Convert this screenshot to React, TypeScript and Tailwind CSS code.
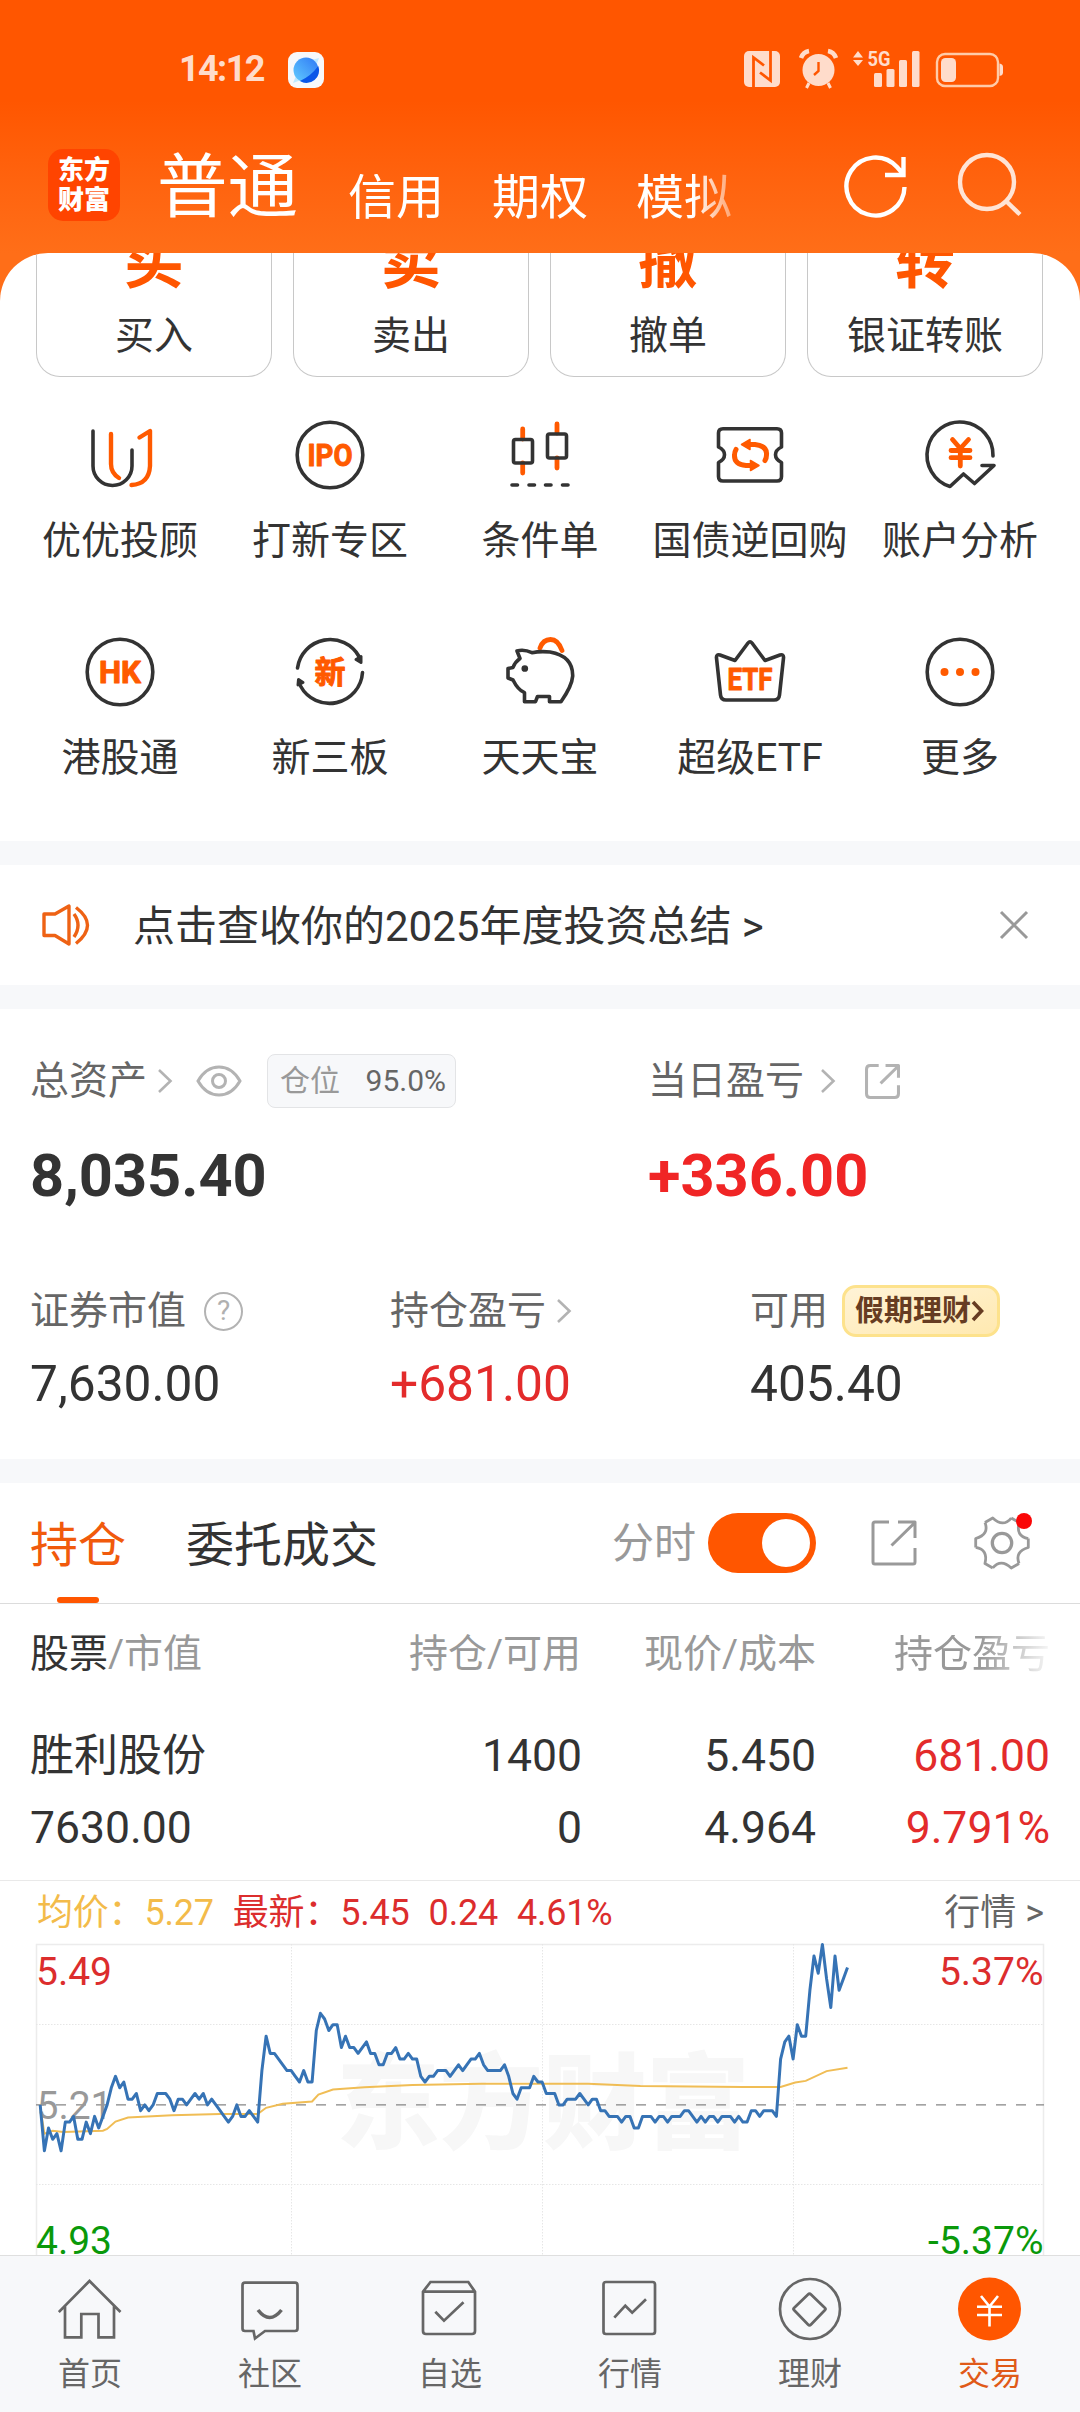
import type { ReactNode } from 'react'

const DARK = '#333333'
const ORANGE = '#ff5a00'
const FONT = "Roboto, 'Noto Sans CJK SC', sans-serif"

const actions = [
  { glyph: '买', label: '买入' },
  { glyph: '卖', label: '卖出' },
  { glyph: '撤', label: '撤单' },
  { glyph: '转', label: '银证转账' },
]

function IconBox({ children }: { children: ReactNode }) {
  return (
    <svg className="shrink-0" width="80" height="80" viewBox="0 0 80 80" fill="none" stroke={DARK} strokeWidth="3.6" strokeLinecap="round" strokeLinejoin="round">
      {children}
    </svg>
  )
}

function IconText({ y, width, children }: { y: number; width: number; children: string }) {
  return (
    <text x={40 - width / 2} y={y} textLength={width} lengthAdjust="spacingAndGlyphs" fill={ORANGE} stroke={ORANGE} strokeWidth="1" fontSize="31" fontWeight="700" fontFamily={FONT}>
      {children}
    </text>
  )
}

const services: { label: string; icon: ReactNode }[] = [
  {
    label: '优优投顾',
    icon: (
      <IconBox>
        <path d="M13 16V51A19.5 19.5 0 0 0 52 51V35" />
        <path d="M31 19V49Q31 58 39 63M59.5 22.5L70 16V51Q69 69 51.5 70" stroke={ORANGE} strokeWidth="4.4" />
      </IconBox>
    ),
  },
  {
    label: '打新专区',
    icon: (
      <IconBox>
        <circle cx="40" cy="40" r="32.8" />
        <IconText y={51} width={45}>IPO</IconText>
      </IconBox>
    ),
  },
  {
    label: '条件单',
    icon: (
      <IconBox>
        <path d="M22.7 14V24M22.7 48V58M57 9V18M57 43V53" stroke={ORANGE} strokeWidth="4.8" />
        <rect x="13.5" y="24.5" width="19" height="23.5" rx="2" />
        <rect x="47.5" y="19" width="19" height="24" rx="2" />
        <path d="M12 70H17.5M29 70H34.5M45.5 70H51M62.5 70H68" />
      </IconBox>
    ),
  },
  {
    label: '国债逆回购',
    icon: (
      <IconBox>
        <path d="M13 13.7H67Q71.5 13.7 71.5 18V32Q65.5 35 65.5 39.7T71.5 47.5V61.5Q71.5 66 67 66H13Q8.5 66 8.5 61.5V47.5Q14.5 44.5 14.5 39.7T8.5 32V18Q8.5 13.7 13 13.7Z" />
        <path d="M39 29.5H45Q57.5 31 56.5 40Q56.5 43 55 45.5M26 34.5Q24.5 37 24.5 40Q24 49.5 36 50.5H42" stroke={ORANGE} strokeWidth="5" />
        <path d="M31.5 29.5L40 24.5V34.5ZM49 50.5L40.5 45.5V55.5Z" stroke={ORANGE} fill={ORANGE} strokeWidth="1.5" />
      </IconBox>
    ),
  },
  {
    label: '账户分析',
    icon: (
      <IconBox>
        <path d="M73 41A33 33 0 1 0 30 71.5L43.5 59L54.5 68.5L74 50.5H62" />
        <path d="M32.5 24.5L40.3 33.5L48.5 24.5M40.3 34V51M31 35.5H50M31 42.7H50" stroke={ORANGE} strokeWidth="4.8" />
      </IconBox>
    ),
  },
  {
    label: '港股通',
    icon: (
      <IconBox>
        <circle cx="40" cy="40" r="32.8" />
        <IconText y={51} width={42}>HK</IconText>
      </IconBox>
    ),
  },
  {
    label: '新三板',
    icon: (
      <IconBox>
        <path d="M7.5 36A33 33 0 0 1 69 24.5M72.5 40.5A33 33 0 0 1 10.5 54" />
        <path d="M71 24.5V30.5L66 27.5ZM8.5 47.5L8 53L13 50.5Z" fill={DARK} strokeWidth="3" />
        <IconText y={51} width={31}>新</IconText>
      </IconBox>
    ),
  },
  {
    label: '天天宝',
    icon: (
      <IconBox>
        <path d="M40 16Q43 7.5 50.5 7.5T62 18.5" stroke={ORANGE} strokeWidth="4.8" />
        <path d="M17 19Q24 17 32 20.7Q40 19 50 20Q73 24 72.7 44Q72 54 61 69.7H49.5V64.5H37.5L35.5 69.7H24.5V60.7Q18 58 13 48L8 46V36.5L13 35.5Q15 30 20 26.5Z" />
        <circle cx="24.8" cy="36.5" r="2.6" fill={DARK} strokeWidth="1.5" />
      </IconBox>
    ),
  },
  {
    label: '超级ETF',
    icon: (
      <IconBox>
        <path d="M10 23L25 28.5L38 11Q40 8.5 42 11L55 28.5L70 23Q74 22 73.5 26L69.5 63Q69 68 64 68H16Q11 68 10.5 63L6.5 26Q6 22 10 23Z" />
        <IconText y={58} width={45}>ETF</IconText>
      </IconBox>
    ),
  },
  {
    label: '更多',
    icon: (
      <IconBox>
        <circle cx="40" cy="40" r="32.8" />
        <g fill={ORANGE} stroke="none">
          <circle cx="24.5" cy="40" r="4" />
          <circle cx="40" cy="40" r="4" />
          <circle cx="55.5" cy="40" r="4" />
        </g>
      </IconBox>
    ),
  },
]

const navItems: { label: string; active?: boolean; icon: ReactNode }[] = [
  { label: '首页', icon: <path d="M.8 35L31.5 4L62.5 35M7 29V60.3H23.3V37H40.5V60.3H56V29" /> },
  {
    label: '社区',
    icon: (
      <>
        <path d="M7 5.7H57Q59.5 5.7 59.5 8.5V51.5Q59.5 54 57 54H27L17 61.5L15.5 54H7Q4.5 54 4.5 51.5V8.5Q4.5 5.7 7 5.7Z" />
        <path d="M20 33Q31.5 48 43.5 33" strokeWidth="3.6" />
      </>
    ),
  },
  { label: '自选', icon: <path d="M12.5 5H50.3L57 14.7V54Q57 57 54 57H8Q5 57 5 54V14.7ZM5 14.7H57M17.3 34.7L26 43.7L45.5 25.3" /> },
  {
    label: '行情',
    icon: (
      <>
        <rect x="5.5" y="5" width="51.5" height="52" rx="2.5" />
        <path d="M16.3 40.7L27.3 28.7L34.2 35.7L48 22.3" />
      </>
    ),
  },
  {
    label: '理财',
    icon: (
      <>
        <circle cx="32" cy="32" r="30" />
        <path d="M30 17.5Q31.5 16 33 17.5L47 31Q48 32 47 33L33 47.5Q31.5 49 30 47.5L16 33Q15 32 16 31Z" />
      </>
    ),
  },
  {
    label: '交易',
    active: true,
    icon: (
      <>
        <circle cx="31.5" cy="32" r="31.5" fill="#ff5600" stroke="none" />
        <path d="M23 19L31.5 29.5L40 19M31.5 29.5V49.5M19 29.7H44M19 38H44" stroke="#fff" strokeWidth="2.6" />
      </>
    ),
  },
]

// minute prices of the session so far, in cents
const prices = [
  521, 513, 517, 515, 516, 513, 518, 518, 519, 515, 515, 518, 516, 519, 517, 519, 521, 524, 526, 524,
  525, 522, 522, 523, 520, 521, 520, 521, 523, 523, 523, 522, 520, 522, 522, 521, 522, 523, 522, 523,
  521, 522, 521, 520, 519, 518, 519, 521, 519, 519, 520, 519, 518, 527, 533, 530, 530, 529, 528, 527,
  527, 526, 525, 527, 525, 525, 534, 537, 536, 534, 535, 535, 531, 533, 531, 531, 530, 531, 532, 530,
  530, 528, 528, 530, 530, 531, 529, 529, 530, 529, 529, 526, 525, 526, 526, 527, 527, 527, 526, 527,
  528, 527, 528, 529, 529, 530, 528, 527, 527, 527, 527, 528, 526, 523, 522, 524, 524, 524, 526, 525,
  525, 523, 523, 523, 521, 521, 522, 522, 522, 523, 522, 521, 522, 522, 520, 520, 519, 519, 519, 518,
  519, 519, 517, 517, 519, 519, 519, 518, 519, 519, 518, 519, 519, 519, 520, 520, 519, 518, 519, 518,
  519, 519, 518, 519, 519, 519, 518, 519, 518, 518, 520, 520, 519, 520, 520, 520, 519, 529, 532, 533,
  529, 535, 533, 533, 541, 547, 544, 549, 543, 538, 547, 541, 543, 545,
]

// [minute, average price]
const averages = [
  [0, 520.7], [1, 516], [3, 516.5], [5.5, 516.3], [15, 516.5], [16, 516.8], [18, 518.1], [21, 518.8],
  [31.5, 519.2], [43, 519.4], [52, 519.4], [54, 520.5], [58, 521.2], [65, 521.6], [66.5, 522.8],
  [70, 523.7], [77.5, 524.1], [89, 524.5], [105.5, 524.7], [131, 524.7], [143.5, 524.3], [168, 524.15],
  [177, 524.15], [180.5, 524.9], [183, 525.2], [188, 526.9], [193, 527.5],
]

const px = (minute: number) => (minute + 1) * 4.183
const py = (cents: number) => 0.5 + (549 - cents) * 5.73
const toPoints = (pts: number[][]) => pts.map(([m, c]) => `${px(m).toFixed(1)},${py(c).toFixed(1)}`).join(' ')

function Chart() {
  return (
    <svg width="1010" height="312" viewBox="-1 -1 1010 312" fill="none" fontFamily={FONT} fontSize="39">
      <text x="300" y="197" fontSize="104" fontWeight="900" fill="#f7f7f7" textLength="414">东方财富</text>
      <path d="M0.5 320V0.5H1007.5V320" stroke="#ececec" strokeWidth="1.5" />
      <path d="M0 80.5H1008M0 240.5H1008M255.5 0V312M506.5 0V312M757.5 0V312" stroke="#e6e6e6" strokeDasharray="1.5 1.5" />
      <path d="M0 160.8H1008" stroke="#858585" strokeWidth="1.2" strokeDasharray="10 10" />
      <text x="0.5" y="175" fill="#999">5.21</text>
      <polyline points={toPoints(averages)} stroke="#f0bd55" strokeWidth="2" />
      <polyline points={toPoints(prices.map((c, i) => [i, c]))} stroke="#3673b5" strokeWidth="3" strokeLinejoin="round" />
      <text x="0" y="41" fill="#dc2d2d">5.49</text>
      <text x="1007.5" y="41" fill="#dc2d2d" textAnchor="end">5.37%</text>
      <text x="0" y="310" fill="#0a990a">4.93</text>
      <text x="1007.5" y="310" fill="#0a990a" textAnchor="end">-5.37%</text>
    </svg>
  )
}

function Chevron() {
  return (
    <svg width="16" height="26" viewBox="0 0 16 26" fill="none" stroke="#b3b3b3" strokeWidth="2.6">
      <path d="M2 2L13.5 13L2 24" />
    </svg>
  )
}

function StatusBar() {
  return (
    <div className="flex h-[138px] items-start justify-between pt-[50px] pr-[76px] pl-[179px] text-[#ffdccb]">
      <div className="flex items-center">
        <span className="w-[109px] text-[36px] leading-[38px] font-bold tracking-[-1.6px]">14:12</span>
        <svg className="mt-0.5" width="36" height="36" viewBox="0 0 36 36">
          <defs>
            <linearGradient id="planet" x1="0" y1="1" x2="1" y2="0">
              <stop offset="0" stopColor="#62cdff" />
              <stop offset="1" stopColor="#2f78f5" />
            </linearGradient>
          </defs>
          <rect width="36" height="36" rx="9" fill="#f7f8fb" />
          <path d="M5 31L8 24L24 8L31 6L28 14L13 28Z" fill="#bfe9ff" />
          <circle cx="18" cy="18" r="12.5" fill="url(#planet)" />
          <path d="M30.3 14A12.5 12.5 0 0 1 12 29Q23 24 30.3 14Z" fill="#0a56e8" />
        </svg>
      </div>
      <svg className="overflow-visible" width="264" height="40" viewBox="740 50 264 40" fill="currentColor">
        <rect x="744" y="51" width="36" height="36" rx="5" />
        <path d="M753.5 87V57.5L764 65.5M770.5 51V80.5L760 72.5" stroke="#ff5600" strokeWidth="2.8" fill="none" />
        <circle cx="818.5" cy="70" r="16" />
        <path d="M801 58Q803 52 809 51M828 51Q834 52 836 58" stroke="currentColor" strokeWidth="4.5" fill="none" />
        <path d="M809 83L806.5 88M828 83L830.5 88" stroke="currentColor" strokeWidth="3" />
        <path d="M818.5 62V71L814 75" stroke="#ff5600" strokeWidth="2.4" fill="none" />
        <path d="M853 57.5L858 51L863 57.5ZM853 60H863L858 66Z" />
        <text x="867.5" y="66" fontSize="21" fontWeight="700" textLength="23" lengthAdjust="spacingAndGlyphs" fontFamily={FONT}>5G</text>
        <rect x="874" y="73" width="8" height="14" rx="1.5" />
        <rect x="886.5" y="69" width="8" height="18" rx="1.5" />
        <rect x="899" y="60" width="8" height="27" rx="1.5" />
        <rect x="912" y="51" width="7.5" height="36" rx="1.5" />
        <rect x="937" y="54" width="61" height="32" rx="8" fill="none" stroke="#ffcba8" strokeWidth="2.4" />
        <rect x="941" y="58" width="15" height="24" rx="4.5" />
        <path d="M999.5 63.5Q1003 64 1003 67V72.5Q1003 75.5 999.5 76Z" />
      </svg>
    </div>
  )
}

function TopBar() {
  return (
    <div className="flex h-[115px] items-start pl-12 text-white">
      <div className="mt-[11px] flex h-[72px] w-[72px] flex-col items-center justify-center rounded-[15px] bg-[#ff4400] text-[26px] leading-[30px] font-black">
        <span>东方</span>
        <span>财富</span>
      </div>
      <span className="mt-[14px] ml-[37px] w-[144px] text-[70.5px] leading-[72px]">普通</span>
      <div className="mt-9 ml-[47px] flex w-[396px] gap-12 text-[48px] leading-[48px] [mask-image:linear-gradient(to_right,black_345px,transparent_410px)]">
        <span>信用</span>
        <span>期权</span>
        <span>模拟</span>
      </div>
      <svg className="mt-3 ml-[100px]" width="184" height="72" viewBox="844 150 184 72" fill="none" strokeWidth="4.4">
        <path d="M904.5 187A29 29 0 1 1 897 167L904 175M903.5 157V175H885" stroke="#fff" />
        <g stroke="#ffe4d5">
          <circle cx="987" cy="182" r="27" />
          <path d="M1006 201L1020 214.5" />
        </g>
      </svg>
    </div>
  )
}

function Share({ size, color, width, round = 2 }: { size: number; color: string; width: number; round?: number }) {
  return (
    <svg width={size} height={size} viewBox="0 0 46 46" fill="none" stroke={color} strokeWidth={width} strokeLinejoin="round">
      <path d={`M18 2H${2 + round}Q2 2 2 ${2 + round}V${44 - round}Q2 44 ${2 + round} 44H${44 - round}Q44 44 44 ${44 - round}V28M27 2H44V18M43.5 3L20.5 25.5`} />
    </svg>
  )
}

function Assets() {
  return (
    <section className="h-[450px] bg-white pt-[45px]">
      <div className="flex pl-[30px] text-[39px] leading-[54px] text-[#666]">
        <div className="flex w-[618px] items-center">
          <span>总资产</span>
          <span className="ml-2.5"><Chevron /></span>
          <svg className="ml-[23px]" width="46" height="32" viewBox="0 0 46 32" fill="none" stroke="#b3b3b3" strokeWidth="3">
            <path d="M2 16Q10 2 23 2T44 16Q36 30 23 30T2 16Z" />
            <circle cx="23" cy="16" r="6.5" />
          </svg>
          <div className="ml-[25px] flex h-[54px] w-[189px] items-center justify-between rounded-lg border border-[#e3e4e6] bg-[#f7f8fa] pr-[9px] pl-3 text-[30px] leading-none">
            <span className="text-[#999]">仓位</span>
            <span>95.0%</span>
          </div>
        </div>
        <div className="flex items-center">
          <span>当日盈亏</span>
          <span className="mr-[29px] ml-4"><Chevron /></span>
          <Share size={35} color="#b3b3b3" width={4} round={5} />
        </div>
      </div>
      <div className="mt-[32px] flex pl-[30px] text-[59.5px] leading-[72px] font-bold text-[#333]">
        <span className="w-[618px]">8,035.40</span>
        <span className="text-[#f02525]">+336.00</span>
      </div>
      <div className="mt-[69px] flex pl-[30px] text-[39px] leading-[60px] text-[#666]">
        <div className="flex w-[360px] items-center">
          <span>证券市值</span>
          <span className="ml-[18px] flex h-[39px] w-[39px] items-center justify-center rounded-full border-[2.5px] border-[#b3b3b3] text-[28px] leading-none text-[#b0b0b0]">?</span>
        </div>
        <div className="flex w-[360px] items-center">
          <span>持仓盈亏</span>
          <span className="ml-2.5"><Chevron /></span>
        </div>
        <div className="flex items-center">
          <span>可用</span>
          <div className="ml-[14px] flex h-[52px] w-[158px] items-center rounded-[14px] border-[3px] border-[#fde28c] bg-linear-to-br from-[#fff3d6] to-[#ffe9b0] pl-[10px] text-[29px] leading-none font-bold text-[#663c22]">
            <span>假期理财</span>
            <svg width="14" height="24" viewBox="0 0 14 24" fill="none" stroke="currentColor" strokeWidth="3.6">
              <path d="M2 3L10.5 12L2 21" />
            </svg>
          </div>
        </div>
      </div>
      <div className="mt-[13px] flex pl-[30px] text-[49.7px] leading-[60px] text-[#333]">
        <span className="w-[360px]">7,630.00</span>
        <span className="w-[360px] text-[#e32b2b]">+681.00</span>
        <span>405.40</span>
      </div>
    </section>
  )
}

function HoldingTabs() {
  return (
    <div className="flex h-[121px] items-start border-b border-[#dcdcdc] pl-[30px] text-[48px] leading-[48px]">
      <div className="mt-[39px] flex flex-col items-center text-[#f15a0c]">
        <span>持仓</span>
        <span className="mt-[27px] h-1.5 w-[42px] rounded-sm bg-[#ff5600]" />
      </div>
      <span className="mt-[39px] ml-[60px] text-[#333]">委托成交</span>
      <div className="mt-[30px] ml-[234px] flex h-[60px] items-center">
        <span className="mt-0.5 text-[42px] text-[#999]">分时</span>
        <div className="ml-3 flex h-[60px] w-[108px] justify-end rounded-full bg-[#ff5600] p-1.5">
          <div className="h-12 w-12 rounded-full bg-white" />
        </div>
        <span className="ml-[55px]"><Share size={46} color="#999" width={3} /></span>
        <div className="relative ml-[56px]">
          <svg width="58" height="58" viewBox="-29 -29 58 58" fill="none" stroke="#999" strokeWidth="2.8" strokeLinejoin="round">
            {[0, 60, 120, 180, 240, 300].map(deg => (
              <path key={deg} d="M26.3 -4.5V4.5Q12.5 8.5 17 20.5" transform={`rotate(${deg})`} />
            ))}
            <circle r="9.7" strokeWidth="3.3" />
          </svg>
          <span className="absolute -top-px -right-px h-4 w-4 rounded-full bg-[#fa0707]" />
        </div>
      </div>
    </div>
  )
}

function Holdings() {
  return (
    <section className="bg-white">
      <HoldingTabs />
      <div className="grid h-[98px] grid-cols-[318px_233px_235px_234px] items-center pt-0.5 pl-[30px] text-right text-[39px] leading-none text-[#999]">
        <span className="text-left"><span className="text-[#333]">股票</span>/市值</span>
        <span>持仓/可用</span>
        <span>现价/成本</span>
        <span className="[mask-image:linear-gradient(to_right,black_165px,transparent_240px)]">持仓盈亏</span>
      </div>
      <div className="grid h-[179px] grid-cols-[317px_235px_234px_234px] content-start border-b border-[#e9e9e9] pt-[18px] pl-[30px] text-right text-[44.5px] leading-[72px] text-[#333]">
        <span className="text-left text-[44px]">胜利股份</span>
        <span>1400</span>
        <span>5.450</span>
        <span className="text-[#e32b2b]">681.00</span>
        <span className="text-left">7630.00</span>
        <span>0</span>
        <span>4.964</span>
        <span className="text-[#e32b2b]">9.791%</span>
      </div>
      <div className="flex h-[62px] items-center gap-[19px] pt-0.5 pr-9 pl-[37px] text-[36px] leading-none tracking-[-0.2px] text-[#dc2d2d]">
        <span className="text-[#f3bb4a]">均价：5.27</span>
        <span>最新：5.45</span>
        <span>0.24</span>
        <span>4.61%</span>
        <span className="ml-auto tracking-normal text-[#666]">行情 &gt;</span>
      </div>
      <div className="flex pl-[35px]"><Chart /></div>
    </section>
  )
}

export default function App() {
  return (
    <div className="flex h-[2412px] w-[1080px] flex-col overflow-hidden bg-[#f7f8fa] font-[Roboto,'Noto_Sans_CJK_SC',sans-serif] whitespace-nowrap">
      <header className="h-[253px] shrink-0 bg-linear-to-b from-[#ff5600] from-40% to-[#ff6e18]">
        <StatusBar />
        <TopBar />
      </header>

      <main className="min-h-0 flex-1 overflow-hidden bg-[#f7f8fa]">
        <div className="bg-[#ff6e18]">
          <section className="h-[588px] overflow-hidden rounded-t-[48px] bg-white">
            <div className="flex gap-[21px] px-9">
              {actions.map(a => (
                <div key={a.label} className="flex h-[124px] w-[236px] flex-col items-center rounded-b-[24px] border border-t-0 border-[#c8c8c8] text-[#333]">
                  <span className="-mt-[20px] text-[60px] leading-[60px] font-bold text-[#ff5600]">{a.glyph}</span>
                  <span className="mt-[24px] text-[39px] leading-[39px]">{a.label}</span>
                </div>
              ))}
            </div>
            <div className="mt-[38px] grid grid-cols-5 gap-y-[71px] px-[15px]">
              {services.map(s => (
                <div key={s.label} className="flex h-[146px] flex-col items-center">
                  {s.icon}
                  <span className="mt-[27px] text-[39px] leading-[39px] text-[#333]">{s.label}</span>
                </div>
              ))}
            </div>
          </section>
        </div>

        <section className="my-6 flex h-[120px] items-center bg-white pr-[51px] pl-[42px]">
          <svg width="48" height="42" viewBox="0 0 48 42" fill="none" stroke="#ee6214" strokeWidth="3.4" strokeLinejoin="round">
            <path d="M2 10H13L27 2V40L13 31.5H2ZM32 10Q40 21 32 33M34 3.5Q57 21 34 39.5" />
          </svg>
          <span className="mt-[3px] ml-[43px] text-[42px] leading-none text-[#333]">点击查收你的2025年度投资总结 &gt;</span>
          <svg className="ml-auto" width="30" height="30" viewBox="0 0 30 30" stroke="#999" strokeWidth="3">
            <path d="M2 2L28 28M28 2L2 28" />
          </svg>
        </section>

        <Assets />
        <div className="h-6" />
        <Holdings />
      </main>

      <nav className="grid h-[157px] shrink-0 grid-cols-6 border-t border-[#dfdfdf] pt-[21px]">
        {navItems.map(n => (
          <div key={n.label} className={`flex flex-col items-center text-[32px] leading-[32px] ${n.active ? 'text-[#e05a18]' : 'text-[#666]'}`}>
            <svg width="64" height="64" viewBox="0 0 64 64" fill="none" stroke="currentColor" strokeWidth="2.7">
              {n.icon}
            </svg>
            <span className="mt-[17px]">{n.label}</span>
          </div>
        ))}
      </nav>
    </div>
  )
}
